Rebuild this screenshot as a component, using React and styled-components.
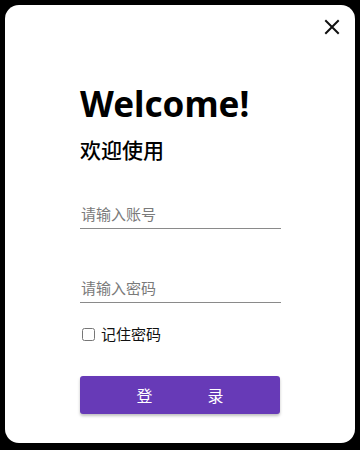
import React from 'react';
import styled, { createGlobalStyle } from 'styled-components';

const GlobalStyle = createGlobalStyle`
    html, body {
        margin: 0;
        padding: 0;
        background: #000;
    }
    body {
        font-family: "Noto Sans", "Noto Sans CJK SC", sans-serif;
    }
`;

const Page = styled.div`
    width: 360px;
    height: 450px;
    padding: 5px;
    box-sizing: border-box;
    background: #000;
`;

const Card = styled.div`
    position: relative;
    height: 438px;
    background: #fff;
    border-radius: 14px;
    padding: 75px 75px 0;
    box-sizing: border-box;
    display: flex;
    flex-direction: column;
`;

const CloseButton = styled.button`
    position: absolute;
    top: 10px;
    right: 11px;
    width: 24px;
    height: 24px;
    padding: 0;
    border: none;
    background: transparent;
    display: flex;
    align-items: center;
    justify-content: center;
    cursor: pointer;
`;

const Title = styled.h1`
    margin: 0;
    font-size: 35px;
    font-weight: 700;
    line-height: 48px;
    color: #000;
`;

const SubTitle = styled.h2`
    margin: 7px 0 0;
    font-size: 21px;
    font-weight: 500;
    line-height: 30px;
    color: #000;
`;

const Field = styled.input`
    width: 200px;
    margin-top: ${props => props.$top}px;
    padding: 0 0 3px 1px;
    border: none;
    border-bottom: 1px solid #8a8a8a;
    outline: none;
    font-family: inherit;
    font-size: 15px;
    line-height: 22px;
    color: #222;
    background: transparent;
    &::placeholder {
        color: #7a7a7a;
    }
`;

const Remember = styled.label`
    display: flex;
    align-items: center;
    gap: 6px;
    margin-top: 20px;
    font-size: 15px;
    line-height: 22px;
    color: #111;
    input {
        margin: 0 0 0 2px;
        width: 13px;
        height: 13px;
    }
`;

const LoginButton = styled.button`
    width: 200px;
    height: 38px;
    margin-top: 31px;
    border: none;
    border-radius: 3px;
    background: #673ab7;
    color: #fff;
    font-family: inherit;
    font-size: 16px;
    display: flex;
    align-items: center;
    justify-content: center;
    gap: 55px;
    box-shadow: 0 2px 3px rgba(0, 0, 0, 0.25);
    cursor: pointer;
`;

const App = () => {
    return (
        <>
        <GlobalStyle />
        <Page>
            <Card>
                <CloseButton aria-label="close">
                    <svg width="16" height="16" viewBox="0 0 16 16">
                        <path d="M2 2 L14 14 M14 2 L2 14" stroke="#111" strokeWidth="2" strokeLinecap="square" fill="none" />
                    </svg>
                </CloseButton>
                <Title>Welcome!</Title>
                <SubTitle>欢迎使用</SubTitle>
                <Field $top={38} placeholder="请输入账号" />
                <Field $top={48} type="password" placeholder="请输入密码" />
                <Remember>
                    <input type="checkbox" />
                    记住密码
                </Remember>
                <LoginButton>
                    <span>登</span>
                    <span>录</span>
                </LoginButton>
            </Card>
        </Page>
        </>
    )
};

export default App;
